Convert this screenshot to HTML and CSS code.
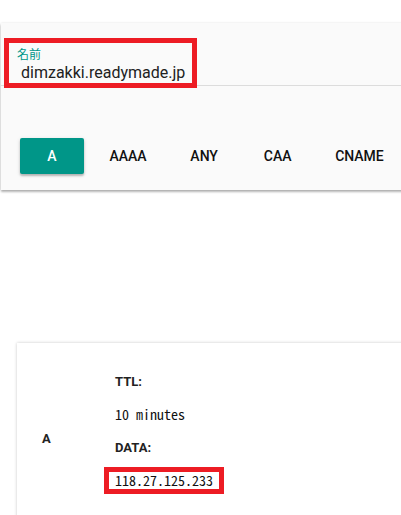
FILE: index.html
```html
<!DOCTYPE html>
<html lang="ja">
<head>
<meta charset="utf-8">
<title>DNS lookup</title>
<link rel="stylesheet" href="styles.css">
</head>
<body>
<div class="page">
  <section class="query-card">
    <div class="name-field">
      <div class="name-box">
        <div class="name-label">名前</div>
        <div class="name-value">dimzakki.readymade.jp</div>
      </div>
      <div class="name-underline"></div>
    </div>
    <div class="type-tabs">
      <button class="type-btn is-active">A</button>
      <button class="type-btn">AAAA</button>
      <button class="type-btn">ANY</button>
      <button class="type-btn">CAA</button>
      <button class="type-btn">CNAME</button>
    </div>
  </section>

  <section class="result-card">
    <div class="result-type">A</div>
    <div class="result-details">
      <div class="detail-label">TTL:</div>
      <div class="detail-value">10 minutes</div>
      <div class="detail-label">DATA:</div>
      <div class="detail-value"><span class="ip-box">118.27.125.233</span></div>
    </div>
  </section>
</div>
</body>
</html>
```
FILE: styles.css
```css
html, body {
  margin: 0;
  padding: 0;
  background: #ffffff;
  overflow: hidden;
}

body {
  font-family: Roboto, "Noto Sans CJK JP", sans-serif;
  color: rgba(0, 0, 0, 0.87);
}

.page {
  padding-top: 23px;
}

.query-card {
  margin-left: 1px;
  margin-right: -10px;
  background: #fafafa;
  box-shadow: 0 2px 2px rgba(0, 0, 0, 0.28), 0 0 2px rgba(0, 0, 0, 0.12);
  padding-top: 15px;
  padding-bottom: 16px;
}

.name-field {
  position: relative;
}

.name-box {
  position: relative;
  z-index: 1;
  width: 175px;
  height: 36px;
  margin-left: 3px;
  border: 5px solid #ed1c24;
  padding: 4px 0 0 8px;
  box-sizing: content-box;
  background: #fafafa;
}

.name-label {
  font-family: "Noto Sans CJK JP", Roboto, sans-serif;
  font-size: 12px;
  line-height: 14px;
  color: #009688;
}

.name-value {
  margin-top: 2px;
  padding-left: 4px;
  font-size: 16px;
  line-height: 20px;
  color: #212121;
  white-space: nowrap;
}

.name-underline {
  height: 1px;
  margin-top: -3px;
  background: #dcdcdc;
}

.type-tabs {
  display: flex;
  gap: 9.5px;
  margin-top: 52px;
  padding-left: 19px;
}

.type-btn {
  min-width: 64px;
  height: 36px;
  padding: 0 16px;
  border: none;
  border-radius: 2px;
  background: transparent;
  font-family: Roboto, sans-serif;
  font-size: 14px;
  font-weight: 500;
  line-height: 36px;
  color: #111111;
  text-transform: uppercase;
}

.type-btn.is-active {
  background: #009688;
  color: #ffffff;
  box-shadow: 0 2px 2px rgba(0, 0, 0, 0.22), 0 1px 4px rgba(0, 0, 0, 0.12);
}

.result-card {
  display: grid;
  grid-template-columns: 98px 1fr;
  margin-top: 153px;
  margin-left: 17px;
  margin-right: -20px;
  background: #ffffff;
  box-shadow: 0 0 3px rgba(0, 0, 0, 0.22);
}

.result-type {
  align-self: center;
  padding-left: 25px;
  font-size: 13px;
  font-weight: 700;
  line-height: 33px;
  color: #222222;
}

.result-details {
  padding: 22px 0 36px 0;
}

.detail-label {
  font-size: 13px;
  font-weight: 700;
  line-height: 33px;
  color: #222222;
}

.detail-value {
  font-family: "Noto Sans Mono CJK JP", "Liberation Mono", monospace;
  font-size: 14px;
  line-height: 33px;
  color: #111111;
}

.ip-box {
  display: inline-block;
  margin-left: -11px;
  padding: 0 6px;
  border: 5px solid #ed1c24;
  line-height: 17px;
}
```
